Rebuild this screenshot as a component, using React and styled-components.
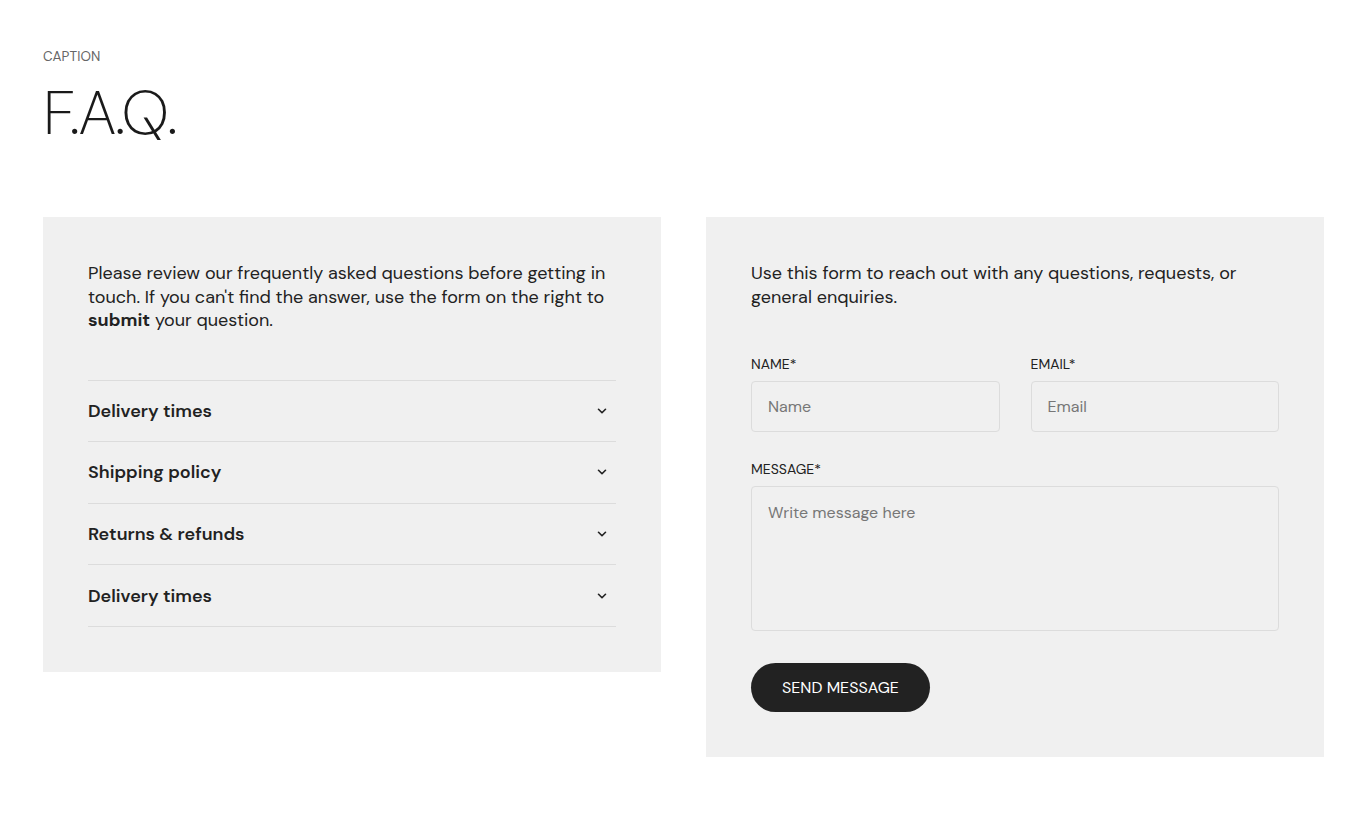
import React from 'react'
import styled, { createGlobalStyle } from 'styled-components';

const faqs = ['Delivery times', 'Shipping policy', 'Returns & refunds', 'Delivery times'];

const Chevron = () => (
    <svg width="14" height="14" viewBox="0 0 24 24" fill="none" stroke="#222" strokeWidth="2.8" strokeLinecap="round" strokeLinejoin="round">
        <polyline points="6 9 12 15 18 9" />
    </svg>
);

const App = () => {
    return (
        <>
            <GlobalStyle />
            <Page>
                <Header>
                    <Caption>CAPTION</Caption>
                    <Title>F.A.Q.</Title>
                </Header>

                <Columns>
                    <Panel>
                        <Intro>
                            Please review our frequently asked questions before getting in touch.
                            If you can't find the answer, use the form on the right to <b>submit</b> your question.
                        </Intro>
                        <FaqList>
                            {faqs.map((q, i) => (
                                <FaqRow key={i}>
                                    <span>{q}</span>
                                    <Chevron />
                                </FaqRow>
                            ))}
                        </FaqList>
                    </Panel>

                    <Panel>
                        <Intro>
                            Use this form to reach out with any questions, requests, or general enquiries.
                        </Intro>
                        <Form onSubmit={e => e.preventDefault()}>
                            <FieldRow>
                                <Field>
                                    <Label>NAME*</Label>
                                    <Input placeholder="Name" />
                                </Field>
                                <Field>
                                    <Label>EMAIL*</Label>
                                    <Input placeholder="Email" />
                                </Field>
                            </FieldRow>
                            <Field>
                                <Label>MESSAGE*</Label>
                                <TextArea placeholder="Write message here" />
                            </Field>
                            <SendButton type="submit">SEND MESSAGE</SendButton>
                        </Form>
                    </Panel>
                </Columns>
            </Page>
        </>
    )
}

export default App;

const GlobalStyle = createGlobalStyle`
    * { box-sizing: border-box; }
    body {
        margin: 0;
        background: #fff;
        color: #222;
        font-family: "DM Sans", Inter, "Noto Sans", sans-serif;
    }
`;

const Page = styled.div`
    padding: 48px 42px 80px 43px;
`;

const Header = styled.div`
    display: flex;
    flex-direction: column;
    margin-bottom: 73px;
`;

const Caption = styled.div`
    font-size: 13.5px;
    color: #666;
    letter-spacing: 0.1px;
`;

const Title = styled.h1`
    margin: 17px 0 0;
    font-size: 62px;
    font-weight: 200;
    line-height: 1;
    letter-spacing: -1.8px;
    color: #1a1a1a;
`;

const Columns = styled.div`
    display: grid;
    grid-template-columns: 1fr 1fr;
    gap: 45px;
    align-items: start;
`;

const Panel = styled.div`
    background-color: #f0f0f0;
    padding: 45px 45px 45px;
`;

const Intro = styled.p`
    margin: 0;
    font-size: 18px;
    line-height: 23.5px;
    color: #222;

    >b {
        font-weight: 700;
    }
`;

const FaqList = styled.div`
    margin-top: 47px;
    border-top: 1px solid #dcdcdc;
`;

const FaqRow = styled.div`
    display: flex;
    align-items: center;
    justify-content: space-between;
    height: 61.6px;
    border-bottom: 1px solid #dcdcdc;
    padding-right: 7px;
    font-size: 18px;
    font-weight: 600;
    color: #222;
    cursor: pointer;
`;

const Form = styled.form`
    display: flex;
    flex-direction: column;
    align-items: flex-start;
    gap: 28px;
    margin-top: 46px;
`;

const FieldRow = styled.div`
    display: grid;
    grid-template-columns: 1fr 1fr;
    gap: 31px;
    width: 100%;
`;

const Field = styled.div`
    display: flex;
    flex-direction: column;
    width: 100%;
`;

const Label = styled.label`
    font-size: 14px;
    color: #222;
    margin-bottom: 8px;
`;

const Input = styled.input`
    height: 51px;
    border: 1px solid #dcdcdc;
    border-radius: 4px;
    background: transparent;
    padding: 0 16px;
    font-family: inherit;
    font-size: 16px;
    color: #222;

    &::placeholder {
        color: #777;
    }
`;

const TextArea = styled.textarea`
    height: 145px;
    border: 1px solid #dcdcdc;
    border-radius: 4px;
    background: transparent;
    padding: 15px 16px;
    font-family: inherit;
    font-size: 16px;
    color: #222;
    resize: none;

    &::placeholder {
        color: #777;
    }
`;

const SendButton = styled.button`
    height: 49px;
    margin-top: 4px;
    padding: 0 31px;
    border: none;
    border-radius: 25px;
    background-color: #222;
    color: #fff;
    font-family: inherit;
    font-size: 16px;
    cursor: pointer;
`;
